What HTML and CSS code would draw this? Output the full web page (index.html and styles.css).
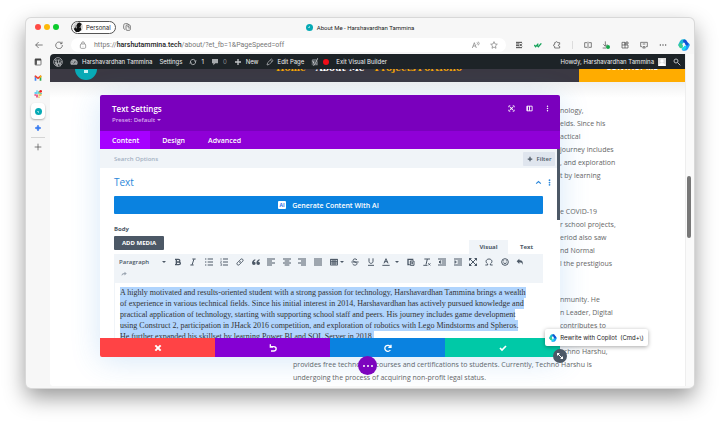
FILE: index.html
```html
<!DOCTYPE html>
<html lang="en">
<head>
<meta charset="utf-8">
<title>About Me - Harshavardhan Tammina</title>
<link rel="stylesheet" href="styles.css">
</head>
<body>
<svg class="defs" aria-hidden="true">
  <symbol id="copilot" viewBox="0 0 24 24">
    <g fill="none" stroke-width="7" stroke-linejoin="round" stroke-linecap="round">
      <path d="M18 10 20 12l-3 6q-1 2-3 2h-3" stroke="#1e9bf5"/>
      <path d="M6 14l-2-2 3-6q1-2 3-2h3" stroke="#18b9d6"/>
      <path d="M6 15l-1-3" stroke="#3fce8c"/>
      <path d="M10 20q3 0 4-4" stroke="#1adcf0" stroke-width="5"/>
      <path d="M13 4q2 0 3 3l2 3" stroke="#1450d2" stroke-width="6"/>
    </g>
  </symbol>
</svg>
<div class="window">
  <header class="titlebar">
    <div class="title-left">
      <span class="light red"></span><span class="light amber"></span><span class="light green"></span>
      <button class="profile" type="button"><svg viewBox="0 0 24 24"><circle cx="12" cy="12" r="12" fill="#d5d5d5"/><path d="M2 17 8 9l3-6 5-2 5 4-3 5 2 9-6 5H7z" fill="#111"/><path d="m5 9 4 2-1 4zM16 14l3-3" stroke="#aaa" stroke-width="2"/></svg>Personal</button>
      <button class="icon" type="button" aria-label="Workspaces"><svg class="line" viewBox="0 0 24 24"><rect x="9" y="6" width="13" height="16" rx="3"/><path d="M6 19c-3 0-4-2-4-4V8c0-4 2-6 5-6h6c2 0 4 1 4 4M13 11h5v6"/></svg></button>
    </div>
    <div class="tab-title"><span class="favicon"></span>About Me - Harshavardhan Tammina</div>
    <div></div>
  </header>

  <div class="toolbar">
    <button class="icon" type="button" aria-label="Back"><svg class="line" viewBox="0 0 24 24"><path d="M23 12H2M11 3l-9 9 9 9"/></svg></button>
    <button class="icon" type="button" aria-label="Reload"><svg class="line" viewBox="0 0 24 24"><path d="M20 7a10 10 0 1 0 2 5M21 2v6h-6"/></svg></button>
    <div class="address">
      <svg class="line soft" viewBox="0 0 24 24"><rect x="4" y="9" width="16" height="13" rx="3"/><path d="M8 9V6c0-5 8-5 8 0v3M12 15v1"/></svg>
      <div class="url" role="textbox" contenteditable="true" aria-label="Address" spellcheck="false">https://<b>harshutammina.tech</b>/about/?et_fb=1&amp;PageSpeed=off</div>
      <button class="icon soft" type="button" aria-label="Read aloud"><svg class="line" viewBox="0 0 24 24"><path d="m1 21 6-16 6 16M3 15h8M15 4q3 3 0 7M19 2q5 5 0 11"/></svg></button>
      <button class="icon soft" type="button" aria-label="Favorite"><svg class="line" viewBox="0 0 24 24"><path d="m12 2 3 7 7 .6-5.500 5L18 22l-6-4-6 4 1.500-7.400L2 9.600 9 9z"/></svg></button>
    </div>
    <div class="extensions">
      <button class="icon" type="button" aria-label="Blocker"><svg class="line" viewBox="0 0 24 24"><path d="M3 4h18M3 9h9M3 14h9M3 20h18M13 8l8 8M21 8l-8 8" stroke-width="3"/></svg></button>
      <button class="icon" type="button" aria-label="Grammar"><svg viewBox="0 0 24 24" fill="none" stroke="#15a35a" stroke-width="4"><path d="m1 12 4 5 8-9M9 13l4 4 9-10"/></svg></button>
      <button class="icon" type="button" aria-label="Extensions"><svg class="line" viewBox="0 0 24 24"><path d="M20 9V5h-6c-1-4-6-4-7 0H5v5c-5 0-5 6 0 6v5h15v-5c-5 1-5-7 0-6z"/></svg></button>
      <span class="divider"></span>
      <button class="icon" type="button" aria-label="Split screen"><svg class="line" viewBox="0 0 24 24"><path d="M9 5H2v14h7M15 5h7v14h-7M12 2v20"/></svg></button>
      <button class="icon" type="button" aria-label="Downloads"><svg class="line" viewBox="0 0 24 24"><path d="M10 1v14M4 10l6 6 6-6M2 21h10"/><circle cx="18" cy="18" r="6" fill="#16a34a" stroke="none"/></svg></button>
      <button class="icon" type="button" aria-label="Collections"><svg class="line" viewBox="0 0 24 24"><path d="M3 4h9v17H3zM3 12h18v9h-9M15 3h6v6h-6zM12 12V4"/></svg></button>
      <button class="icon" type="button" aria-label="Screenshot"><svg class="line" viewBox="0 0 24 24"><path d="M7 17H2V4h20v13h-5M8 9h8M8 21l4-6 4 6z"/></svg></button>
      <button class="icon" type="button" aria-label="More"><svg viewBox="0 0 24 24" fill="#444"><circle cx="4" cy="12" r="2"/><circle cx="12" cy="12" r="2"/><circle cx="20" cy="12" r="2"/></svg></button>
      <button class="icon big" type="button" aria-label="Copilot"><svg><use href="#copilot"/></svg></button>
    </div>
  </div>

  <div class="main">
    <nav class="side" aria-label="Tabs">
      <button class="side-tab" type="button" aria-label="Tab panel"><svg class="line" viewBox="0 0 24 24"><rect x="3" y="3" width="18" height="18" rx="2"/><path d="M3 5h18M6 4v16" stroke-width="5"/></svg></button>
      <button class="side-tab" type="button" aria-label="Gmail"><svg viewBox="0 0 24 24"><path d="M2 20V7l5 4v9z" fill="#4285f4"/><path d="M17 20v-9l5-4v13z" fill="#34a853"/><path d="M2 8V5l3-1 7 6 7-6 3 1v3l-10 8z" fill="#ea4335"/><path d="m17 7 3-3 2 2v3l-5 4z" fill="#fbbc04"/></svg></button>
      <button class="side-tab" type="button" aria-label="Slack"><svg viewBox="0 0 24 24" fill="none" stroke-width="4" stroke-linecap="round"><path d="M3 9h7M9 3v1" stroke="#36c5f0"/><path d="M15 10V5M21 10v1" stroke="#2eb67d"/><path d="M21 15h-6M15 21v1" stroke="#ecb22e"/><path d="M9 15v6M3 15h1" stroke="#e01e5a"/><circle cx="20" cy="4" r="4" fill="#f02020"/></svg></button>
      <button class="side-tab current" type="button" aria-label="About Me"><span class="favicon"></span></button>
      <button class="side-tab" type="button" aria-label="Gemini"><svg viewBox="0 0 24 24"><path d="M12 3q1 8 9 9-8 1-9 9-1-8-9-9 8-1 9-9z" fill="#3b7df0" stroke="#3b7df0" stroke-width="2"/></svg></button>
      <span class="rule"></span>
      <button class="side-tab" type="button" aria-label="New tab"><svg class="line" viewBox="0 0 24 24"><path d="M12 2v20M2 12h20"/></svg></button>
    </nav>

    <div class="page">
      <nav class="adminbar" aria-label="WordPress">
        <a href="#" class="wp" aria-label="WordPress"><svg viewBox="0 0 24 24"><circle cx="12" cy="12" r="10.500" fill="none" stroke="#a7aaad" stroke-width="2"/><path d="M4 7h6M11 7h7M6 7l5 13 2-7M12 7l5 13 3-11M5 12l4 9" fill="none" stroke="#a7aaad" stroke-width="2.500"/></svg></a>
        <a href="#"><svg viewBox="0 0 24 24"><path d="M12 3A11 11 0 0 0 3 20h18A11 11 0 0 0 12 3z" fill="#a7aaad"/><path d="m11 17 5-8M5 13h2M8 8l1 1M17 14h2" stroke="#1d2327" stroke-width="2"/></svg>Harshavardhan Tammina</a>
        <a href="#">Settings</a>
        <a href="#"><svg viewBox="0 0 24 24" fill="none" stroke="#a7aaad" stroke-width="3"><path d="M4 13a8 8 0 0 1 14-6M20 11a8 8 0 0 1-14 6"/><path d="m14 8 9-1-3 6zM10 16l-9 1 3-6z" fill="#a7aaad" stroke="none"/></svg>1</a>
        <a href="#" class="dim"><svg viewBox="0 0 24 24"><path d="M3 3h18v13h-8l-6 6v-6H3z" fill="#a7aaad"/></svg>0</a>
        <a href="#"><svg viewBox="0 0 24 24"><path d="M12 3v18M3 12h18" stroke="#c3c6c9" stroke-width="4"/></svg>New</a>
        <a href="#"><svg viewBox="0 0 24 24" fill="none" stroke="#a7aaad" stroke-width="2.500"><path d="m3 21 2-7L16 3l5 5L10 19zM13 6l5 5"/></svg>Edit Page</a>
        <a href="#" class="seo"><svg viewBox="0 0 24 24"><path d="M5 3h11l-6 19H2V6z" fill="#5c6268"/><path d="m5 8 4 9M20 1l-7 16q-2 5-6 5" fill="none" stroke="#c3c6c9" stroke-width="3"/><path d="M20 8v14h-8z" fill="#7d8388"/></svg><span class="dot"></span></a>
        <a href="#">Exit Visual Builder</a>
        <a href="#" class="howdy">Howdy, Harshavardhan Tammina<svg viewBox="0 0 24 24"><path d="M0 0h24v24H0z" fill="#dcdcdc"/><circle cx="12" cy="9" r="5" fill="#fff"/><path d="M2 24q1-9 10-9t10 9z" fill="#fff"/></svg></a>
        <a href="#" class="find" aria-label="Search"><svg viewBox="0 0 24 24" fill="none" stroke="#b7babd" stroke-width="3"><circle cx="9" cy="9" r="6"/><path d="m13 13 9 9"/></svg></a>
      </nav>
      <header class="site-head">
        <span class="logo"><span class="mark"></span></span>
        <nav class="site-nav" aria-label="Site"><a href="#">Home</a><a href="#" class="here">About Me</a><a href="#">Projects</a><a href="#">Portfolio</a></nav>
        <a href="#" class="contact"><span>CONTACT ME</span></a>
      </header>

      <article class="article">
        <p class="beside">nology,<br>elds. Since his<br>actical<br>journey includes<br>, and exploration<br>t by learning</p>
        <p class="beside">e COVID-19<br>r school projects,<br>eriod also saw<br>nd Normal<br>l the prestigious</p>
        <p class="beside">nmunity. He<br>n Leader, Digital<br>contributes to<br><br>echno Harshu,</p>
        <p class="full">provides free technology courses and certifications to students. Currently, Techno Harshu is<br>undergoing the process of acquiring non-profit legal status.</p>
      </article>

      <section class="modal" role="dialog" aria-label="Text Settings">
        <header class="modal-head">
          <div><h2>Text Settings</h2><button class="preset" type="button">Preset: Default <span class="caret"></span></button></div>
          <div class="modal-tools">
            <button type="button" aria-label="Expand"><svg viewBox="0 0 24 24" fill="none" stroke="#fff" stroke-width="3"><path d="M3 8V3h5M16 3h5v5M21 16v5h-5M8 21H3v-5M7 7l10 10M17 7 7 17"/><circle cx="12" cy="12" r="2" fill="#fff"/></svg></button>
            <button type="button" aria-label="Dock"><svg viewBox="0 0 24 24" fill="none" stroke="#fff" stroke-width="3"><path d="M3 4h18v16H3zM12 4v16M5 4v16"/></svg></button>
            <button type="button" aria-label="Options"><svg viewBox="0 0 24 24" fill="#fff"><circle cx="12" cy="4" r="2.500"/><circle cx="12" cy="12" r="2.500"/><circle cx="12" cy="20" r="2.500"/></svg></button>
          </div>
        </header>
        <div class="modal-tabs"><button class="on" type="button">Content</button><button type="button">Design</button><button type="button">Advanced</button></div>
        <div class="search"><input type="text" placeholder="Search Options" aria-label="Search Options"><button type="button"><svg viewBox="0 0 24 24"><path d="M12 3v18M3 12h18" stroke="#4c5866" stroke-width="5"/></svg>Filter</button></div>
        <div class="modal-body">
          <div class="group"><h3>Text</h3>
            <button type="button" aria-label="Collapse"><svg viewBox="0 0 24 24" fill="none" stroke="#2b87da" stroke-width="4"><path d="m4 16 8-7 8 7"/></svg></button>
            <button type="button" aria-label="Group options"><svg viewBox="0 0 24 24" fill="#2b87da"><circle cx="12" cy="4" r="3"/><circle cx="12" cy="12" r="3"/><circle cx="12" cy="20" r="3"/></svg></button></div>
          <button class="generate" type="button"><span class="ai">AI</span>Generate Content With AI</button>
          <h4 id="body-label">Body</h4>
          <div class="editor-top"><button class="media" type="button">ADD MEDIA</button>
            <div class="modes"><button type="button">Visual</button><button type="button" class="on">Text</button></div></div>
          <div class="tools">
            <div class="tool-row">
              <select aria-label="Format"><option>Paragraph</option></select><span class="caret dark"></span>
              <div class="tool-set">
                <button type="button" aria-label="Bold"><svg viewBox="0 0 24 24" fill="none" stroke="#4c5866" stroke-width="4"><path d="M7 3v18M3 4h10c6 0 6 8 0 8H7h7c7 0 7 8 0 8H3"/></svg></button>
                <button type="button" aria-label="Italic"><svg viewBox="0 0 24 24" fill="none" stroke="#4c5866" stroke-width="3"><path d="M10 3h10M4 21h10M15 3 9 21"/></svg></button>
                <button type="button" aria-label="Bulleted list"><svg class="tool" viewBox="0 0 24 24"><path d="M8 3h16M8 12h16M8 21h16M0 3h4M0 12h4M0 21h4"/></svg></button>
                <button type="button" aria-label="Numbered list"><svg class="tool" viewBox="0 0 24 24"><path d="M9 3h15M9 12h15M9 21h15"/><path d="M3 0v6M1 9h4l-4 5h4M1 17h4v6H1M2 20h3" stroke-width="1.500"/></svg></button>
                <button type="button" aria-label="Link"><svg class="tool" viewBox="0 0 24 24"><path d="m10 8 4-4c4-4 10 2 6 6l-4 4c-2 2-5 1-6-1M14 16l-4 4c-4 4-10-2-6-6l4-4c2-2 5-1 6 1"/></svg></button>
                <button type="button" aria-label="Quote"><svg viewBox="0 0 24 24"><path d="M10 4Q0 7 0 15q0 6 6 6 5 0 5-5t-5-4q0-3 4-5zM23 4q-10 3-10 11 0 6 6 6 5 0 5-5t-5-4q0-3 4-5z" fill="#4c5866"/></svg></button>
                <button type="button" aria-label="Align left"><svg class="tool" viewBox="0 0 24 24"><path d="M0 3h24M0 9h15M0 15h24M0 21h15"/></svg></button>
                <button type="button" aria-label="Align center"><svg class="tool" viewBox="0 0 24 24"><path d="M0 3h24M5 9h14M0 15h24M5 21h14"/></svg></button>
                <button type="button" aria-label="Align right"><svg class="tool" viewBox="0 0 24 24"><path d="M0 3h24M9 9h15M0 15h24M9 21h15"/></svg></button>
                <button type="button" aria-label="Justify"><svg class="tool" viewBox="0 0 24 24"><path d="M0 3h24M0 9h24M0 15h24M0 21h24"/></svg></button>
                <button type="button" class="wide" aria-label="Table"><svg class="tool" viewBox="0 0 24 24"><path d="M1 4h22v17H1zM1 10h22M1 15h22M9 4v17M15 4v17M1 5h22"/></svg><span class="caret dark"></span></button>
                <button type="button" aria-label="Strikethrough"><svg class="tool" viewBox="0 0 24 24"><path d="M18 6c-2-5-12-4-12 1 0 6 12 4 12 10 0 6-12 6-13 0M1 12h22"/></svg></button>
                <button type="button" aria-label="Underline"><svg class="tool" viewBox="0 0 24 24"><path d="M6 1v9c0 8 12 8 12 0V1M3 22h18"/></svg></button>
                <button type="button" class="wider" aria-label="Text color"><svg class="tool" viewBox="0 0 24 24"><path d="m6 16 6-14 6 14M8 11h8M1 22h22"/></svg><span class="caret dark"></span></button>
                <button type="button" aria-label="Paste"><svg class="tool" viewBox="0 0 24 24"><path d="M8 20H3V4h14v3M6 4h8" stroke-width="4"/><path d="M10 9h11v13H10zM13 13h5M13 17h5"/></svg></button>
                <button type="button" aria-label="Clear formatting"><svg class="tool" viewBox="0 0 24 24"><path d="M4 3h17M13 3 9 20M1 22h12M16 16l6 6M22 16l-6 6"/></svg></button>
                <button type="button" aria-label="Outdent"><svg class="tool" viewBox="0 0 24 24"><path d="M0 3h24M11 9h13M11 15h13M0 21h24M7 8l-4 4 4 4z"/></svg></button>
                <button type="button" aria-label="Indent"><svg class="tool" viewBox="0 0 24 24"><path d="M0 3h24M11 9h13M11 15h13M0 21h24M3 8l4 4-4 4z"/></svg></button>
                <button type="button" aria-label="Fullscreen"><svg class="tool" viewBox="0 0 24 24"><path d="m3 3 18 18M21 3 3 21"/><path d="M0 0h9L0 9zM24 0v9l-9-9zM0 24v-9l9 9zM24 24h-9l9-9z" fill="#4c5866" stroke="none"/></svg></button>
                <button type="button" aria-label="Special character"><svg class="tool" viewBox="0 0 24 24"><path d="M1 21h7v-3C-1 11 4 3 12 3s13 8 4 15v3h7"/></svg></button>
                <button type="button" aria-label="Emoji"><svg class="tool" viewBox="0 0 24 24"><circle cx="12" cy="12" r="10"/><path d="M7 14q5 6 10 0M8 7v3M16 7v3"/></svg></button>
                <button type="button" aria-label="Undo"><svg viewBox="0 0 24 24"><path d="M10 2v5c8 0 12 4 10 14-1-6-4-8-10-8v5L2 10z" fill="#4c5866"/></svg></button>
              </div>
            </div>
            <button class="redo" type="button" aria-label="Redo"><svg viewBox="0 0 24 24"><path d="M14 3v5C6 8 1 12 3 21c2-6 5-8 11-8v5l9-8z" fill="#9aa4b0"/></svg></button>
          </div>
          <div class="editor" role="textbox" contenteditable="true" aria-labelledby="body-label" spellcheck="false"><mark>A highly motivated and results-oriented student with a strong passion for technology, Harshavardhan Tammina brings a wealth<br>of experience in various technical fields. Since his initial interest in 2014, Harshavardhan has actively pursued knowledge and<br>practical application of technology, starting with supporting school staff and peers. His journey includes game development<br>using Construct 2, participation in JHack 2016 competition, and exploration of robotics with Lego Mindstorms and Spheros.<br>He further expanded his skillset by learning Power BI and SQL Server in 2018.</mark></div>
        </div>
        <footer class="modal-foot">
          <button class="discard" type="button" aria-label="Discard"><svg viewBox="0 0 24 24" stroke="#fff" stroke-width="6"><path d="m4 4 16 16M20 4 4 20"/></svg></button>
          <button class="undo" type="button" aria-label="Undo change"><svg viewBox="0 0 24 24" fill="none" stroke="#fff" stroke-width="4"><path d="M3 8h11c10 0 10 13 0 13H6M4 1v8h8"/></svg></button>
          <button class="again" type="button" aria-label="Redo change"><svg viewBox="0 0 24 24" fill="none" stroke="#fff" stroke-width="4"><path d="M19 8A9 9 0 1 0 19 18M21 2v8h-8"/></svg></button>
          <button class="save" type="button" aria-label="Save"><svg viewBox="0 0 24 24" fill="none" stroke="#fff" stroke-width="5"><path d="m3 12 6 6L21 6"/></svg></button>
        </footer>
        <span class="scroll-thumb"></span>
        <button class="resize" type="button" aria-label="Resize"><svg viewBox="0 0 24 24"><path d="m6 6 12 12" stroke="#fff" stroke-width="3"/><path d="M3 3h9l-9 9zM21 21h-9l9-9z" fill="#fff"/></svg></button>
        <button class="more" type="button" aria-label="Page settings"><span></span><span></span><span></span></button>
        <button class="rewrite" type="button"><svg><use href="#copilot"/></svg>Rewrite with Copilot&nbsp; (Cmd+\)</button>
      </section>
    </div>
    <div class="scrollbar"><span></span></div>
  </div>
</div>
</body>
</html>
```
FILE: styles.css
```css
* { box-sizing: border-box; }
body {
  margin: 0;
  height: 100vh;
  padding: 18px 26px 34px;
  background: #fff;
  font-family: Inter, sans-serif;
  font-size: 6px;
  overflow: hidden;
}
button {
  display: flex;
  align-items: center;
  justify-content: center;
  margin: 0;
  padding: 0;
  border: 0;
  background: none;
  color: inherit;
  font: inherit;
}
svg { flex: none; display: block; width: 8px; height: 8px; }
a { color: inherit; text-decoration: none; }
h2, h3, h4, p { margin: 0; }
.defs { position: absolute; width: 0; height: 0; }
.line { fill: none; stroke: #444; stroke-width: 2; }
.tool { fill: none; stroke: #4c5866; stroke-width: 3; }

.window {
  display: flex;
  flex-direction: column;
  height: 100%;
  border-radius: 5px;
  background: #f7f7f7;
  overflow: hidden;
  box-shadow: 0 0 0 1px #d8d8d8, 0 9px 22px rgba(0, 0, 0, .42);
}

.titlebar {
  display: grid;
  grid-template-columns: 1fr auto 1fr;
  align-items: center;
  height: 18px;
  flex: none;
}
.title-left { display: flex; align-items: center; gap: 3px; padding-left: 9px; }
.light { width: 6px; height: 6px; border-radius: 50%; }
.red { background: #ff4b45; }
.amber { background: #fdb90a; }
.green { background: #0ccb2c; }
.profile {
  gap: 3px;
  height: 13px;
  margin: 0 4px 0 9px;
  padding: 0 4px 0 1px;
  border: 1px solid #555;
  border-radius: 7px;
  background: #fff;
  color: #222;
}
.profile svg { width: 10px; height: 10px; }
.tab-title { display: flex; align-items: center; gap: 4px; color: #222; font-family: Roboto, sans-serif; }
.favicon {
  width: 7px;
  height: 7px;
  border-radius: 50%;
  background: radial-gradient(#7fd8dd 0 1px, #06aab5 1px);
}

.toolbar { display: flex; align-items: center; height: 18px; flex: none; padding: 0 4px 0 9px; }
.toolbar > .icon { margin-right: 12px; }
.address {
  display: flex;
  align-items: center;
  gap: 10px;
  flex: 1;
  height: 14px;
  margin-left: -4px;
  padding: 0 8px;
  border-radius: 7px;
  background: #fff;
}
.url { flex: 1; margin-left: -3px; color: #777; font-family: Roboto, sans-serif; font-size: 7px; white-space: nowrap; }
.url b { color: #222; font-weight: 500; }
.soft .line, .line.soft { stroke: #777; }
.extensions {
  display: flex;
  align-items: center;
  justify-content: space-between;
  width: 175px;
  margin-left: 9px;
}
.big svg { width: 12px; height: 12px; }
.divider { width: 1px; height: 8px; background: #ddd; }

.main { display: flex; flex: 1; min-height: 0; padding-bottom: 2px; }
.side { display: flex; flex-direction: column; align-items: center; gap: 2px; width: 24px; flex: none; padding-top: 1px; }
.side-tab { width: 14px; height: 14px; flex: none; border-radius: 4px; }
.side .current { height: 16px; background: #fff; box-shadow: 0 1px 2px rgba(0, 0, 0, .3); }
.rule { width: 14px; height: 1px; background: #d5d5d5; }
.scrollbar { position: relative; width: 9px; flex: none; background: #fafafa; border-left: 1px solid #eee; }
.scrollbar span { position: absolute; top: 122px; left: 1px; width: 4px; height: 62px; border-radius: 2px; background: #777; }

.page {
  position: relative;
  flex: 1;
  min-width: 0;
  border-radius: 4px 0 0 4px;
  overflow: clip;
  background: #fff;
}
.adminbar {
  display: flex;
  align-items: center;
  gap: 7px;
  height: 15px;
  padding: 0 4px 0 3px;
  background: #1d2327;
  color: #f0f0f1;
  white-space: nowrap;
}
.adminbar a { display: flex; align-items: center; gap: 4px; }
.adminbar .wp svg { width: 10px; height: 10px; }
.adminbar .dim { color: #8c8f94; }
.seo .dot { width: 6px; height: 6px; border-radius: 50%; background: #f00c18; }
.adminbar .howdy { margin-left: auto; }

.site-head {
  display: flex;
  align-items: flex-start;
  height: 13px;
  overflow: hidden;
  background: #3b3943;
}
.logo { width: 22px; height: 22px; margin: -11px 0 0 25px; border-radius: 50%; background: #08aab6; flex: none; }
.mark { display: block; width: 4px; height: 3px; margin: 12px 0 0 9px; background: #cdf3f4; }
.site-nav {
  display: flex;
  gap: 10px;
  margin: -7px auto 0 179px;
  color: #f5a503;
  font: bold 9px/13px "DejaVu Serif", serif;
}
.site-nav a:last-child { margin-left: -8px; }
.here { color: #fff; }
.contact {
  width: 106px;
  flex: none;
  align-self: stretch;
  background: #ffac00;
  color: #fff;
  font: bold 8px/10px "Open Sans", sans-serif;
  text-align: center;
}
.contact span { display: block; margin-top: -7px; }

.article {
  display: flex;
  flex-direction: column;
  gap: 23px;
  height: 304px;
  padding: 22px 0 0 243px;
  background: linear-gradient(#f0f0f0, #fff 16px);
  color: #666;
  font: 7px/13px "Open Sans", sans-serif;
  white-space: nowrap;
}
.beside { padding-left: 267px; }
.full { margin-top: -23px; }

.modal {
  position: absolute;
  top: 41px;
  right: 125px;
  bottom: 29px;
  left: 50px;
  display: flex;
  flex-direction: column;
  border-radius: 2px;
  background: #fff;
  color: #4c5866;
  font-family: "Open Sans", sans-serif;
  font-weight: 600;
  box-shadow: 0 3px 30px rgba(43, 135, 218, .2);
}
.modal-head {
  display: flex;
  justify-content: space-between;
  height: 36px;
  flex: none;
  padding: 7px 9px 0 12px;
  border-radius: 2px 2px 0 0;
  background: #7a00bd;
  color: #fff;
}
.modal-head h2 { font-size: 8px; line-height: 13px; font-weight: 600; }
.preset { height: 10px; gap: 2px; color: #d8a9ef; }
.caret { border: 2px solid transparent; border-top-color: currentColor; border-bottom: 0; }
.dark { color: #4c5866; }
.modal-tools { display: flex; gap: 11px; align-items: center; height: 12px; }
.modal-tools svg { width: 7px; height: 7px; }
.modal-tabs { display: flex; height: 18px; flex: none; background: #8f00d7; color: #fff; font-size: 7px; }
.modal-tabs button { padding: 0 11px 0 12px; }
.modal-tabs .on { background: #a600ff; }
.search {
  display: flex;
  align-items: center;
  height: 19px;
  flex: none;
  padding: 0 5px 0 12px;
  background: #f0f4f8;
}
.search input { flex: 1; padding: 0 2px; border: 0; background: none; font: 600 6px "Open Sans", sans-serif; }
.search input::placeholder { color: #a3b0c2; }
.search button { gap: 4px; width: 32px; height: 14px; border-radius: 1px; background: #dfe5ee; }
.search svg { width: 6px; height: 6px; }
.modal-body { flex: 1; min-height: 0; overflow: hidden; padding: 0 17px 0 14px; }
.group { display: flex; align-items: center; height: 28px; margin-right: -10px; gap: 4px; }
.group h3 { flex: 1; color: #2b87da; font-size: 10px; font-weight: 400; }
.group svg { width: 7px; height: 7px; }
.generate { width: 100%; height: 18px; gap: 6px; border-radius: 1px; background: #0a82e0; color: #fff; font-size: 7px; }
.ai { width: 8px; height: 8px; border-radius: 1px; background: #fff; color: #2874e8; font-size: 5px; line-height: 8px; font-weight: 700; }
.modal-body h4 { margin-top: 10px; font-size: 6px; line-height: 10px; font-weight: 700; }
.editor-top { display: flex; justify-content: space-between; height: 20px; padding-top: 2px; }
.media { width: 50px; height: 14px; border-radius: 1px; background: #4c5866; color: #fff; font-weight: 700; }
.modes { display: flex; gap: 2px; margin-top: 4px; }
.modes button { width: 39px; background: #f0f4f8; font-weight: 700; }
.modes .on { width: 33px; background: #fff; }
.tools { height: 29px; background: #f0f4f8; }
.tool-row { display: flex; align-items: center; height: 16px; padding: 0 17px 0 5px; }
.tool-row select {
  width: 43px;
  height: 12px;
  padding: 0;
  border: 0;
  appearance: none;
  background: none;
  color: #4c5866;
  font: 600 6px "Open Sans", sans-serif;
}
.tool-set { display: flex; justify-content: space-between; flex: 1; margin-left: 6px; }
.tool-set button { width: 11px; height: 10px; }
.tool-set .wide { width: 17px; gap: 2px; }
.tool-set .wider { width: 20px; gap: 5px; }
.redo { width: 12px; height: 8px; margin-left: 4px; }
.redo svg { width: 6px; height: 6px; }
.editor {
  padding: 4px 5px 0;
  border-left: 1px solid #f0f4f8;
  color: #333;
  font: 8px/11px "Liberation Serif", serif;
  white-space: nowrap;
}
.editor mark { padding: 1px 0; background: #b0d4fd; color: inherit; }
.modal-foot { display: grid; grid-template-columns: repeat(4, 1fr); height: 19px; flex: none; }
.discard { background: #ff4345; border-radius: 0 0 0 2px; }
.undo { background: #8500d3; }
.again { background: #0a82e0; }
.save { background: #00c9a7; }
.scroll-thumb { position: absolute; top: 54px; right: 0; width: 3px; height: 71px; background: #4c5866; }
.resize {
  position: absolute;
  right: -7px;
  bottom: -6px;
  width: 14px;
  height: 14px;
  border-radius: 50%;
  background: #4c5866;
}
.more {
  position: absolute;
  left: 258px;
  bottom: -18px;
  gap: 2px;
  width: 19px;
  height: 19px;
  border-radius: 50%;
  background: #7d05be;
}
.more span { width: 2px; height: 2px; border-radius: 50%; background: #fff; }
.rewrite {
  position: absolute;
  right: -88px;
  bottom: 11px;
  gap: 3px;
  width: 103px;
  height: 17px;
  border-radius: 2px;
  background: #fff;
  color: #222;
  font: 6px Inter, sans-serif;
  white-space: nowrap;
  box-shadow: 0 1px 4px rgba(0, 0, 0, .35);
}
```
